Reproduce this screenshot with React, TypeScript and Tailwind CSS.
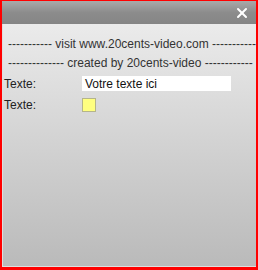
import { X } from "lucide-react";

export default function App() {
  return (
    <div className="w-[258px] h-[270px] border-2 border-t-[1px] border-b-[3px] border-[#ff0000] bg-[#ff0000] overflow-hidden" style={{ fontFamily: '"Liberation Sans", Arial, sans-serif' }}>
      <div className="flex flex-col h-full">
        {/* Title bar */}
        <div className="h-[23px] shrink-0 flex items-center justify-end pr-[6px] bg-gradient-to-b from-[#a9a9a9] via-[#8c8c8c] to-[#858585]">
          <X size={16} strokeWidth={3} className="text-white" />
        </div>

        {/* Body */}
        <div className="flex-1 flex flex-col bg-gradient-to-b from-[#ebebeb] via-[#d2d2d2] to-[#bababa] border-l border-b border-[#dedede] pt-[10px] text-[12px] text-[#333333]">
          <div className="flex whitespace-nowrap h-[19px] items-center pl-[5px]">
            <span>----------- visit www.20cents-video.com -----------</span>
          </div>
          <div className="flex whitespace-nowrap h-[19px] items-center pl-[5px]">
            <span>-------------- created by 20cents-video ------------</span>
          </div>
          <div className="flex items-center h-[21px] mt-[1px] pl-[1px]">
            <span className="w-[78px] text-[#222222]">Texte:</span>
            <div className="w-[149px] h-[15px] bg-white flex items-center pl-[3px] text-[#111111]">Votre texte ici</div>
          </div>
          <div className="flex items-center h-[21px] pl-[1px]">
            <span className="w-[78px] text-[#222222]">Texte:</span>
            <div className="w-[14px] h-[14px] bg-[#ffff80] border border-[#b5b58a]" />
          </div>
        </div>
      </div>
    </div>
  );
}
